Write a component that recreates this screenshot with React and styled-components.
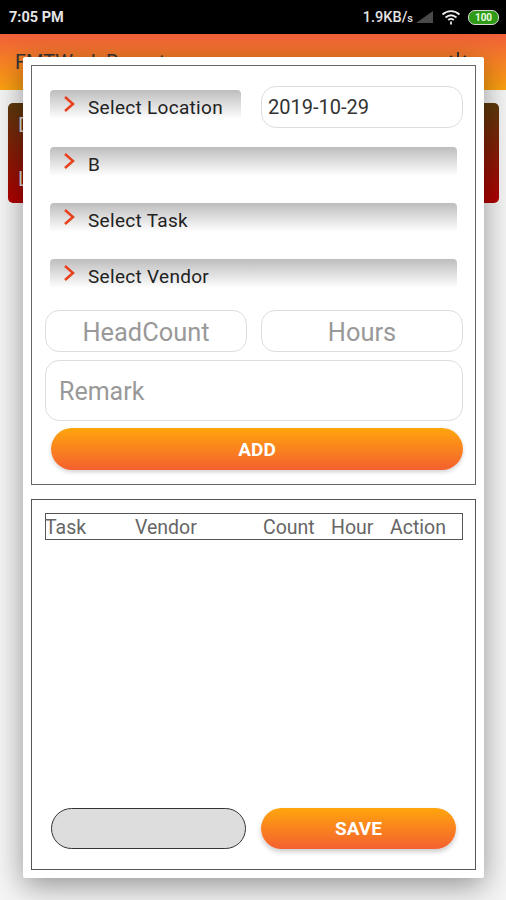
import styled, { createGlobalStyle } from 'styled-components';

const GlobalStyle = createGlobalStyle`
    html, body {
        margin: 0;
        padding: 0;
        background: #f5f5f5;
        font-family: Roboto, "Liberation Sans", sans-serif;
    }
`;

function Chevron() {
    return (
        <ChevronIcon viewBox="0 0 12 16">
            <path d="M2 1 L10 8 L2 15" fill="none" stroke="#e8401c" strokeWidth="2.5" />
        </ChevronIcon>
    );
}

function SelectBox({ label, half }) {
    return (
        <StyledSelect $half={half}>
            <Chevron />
            <span>{label}</span>
        </StyledSelect>
    );
}

function App() {
    return (
        <Screen>
            <GlobalStyle />
            <StatusBar>
                <span>7:05 PM</span>
                <StatusRight>
                    <Speed>1.9KB/<small>s</small></Speed>
                    <svg width="20" height="14" viewBox="0 0 20 14">
                        <path d="M1 13 L18 1 L18 13 Z" fill="#4a4a4a" />
                    </svg>
                    <WifiIcon width="20" height="16" viewBox="0 0 20 16" fill="none" stroke="#eee" strokeWidth="1.8">
                        <path d="M1.5 5.5 C6.5 1 13.5 1 18.5 5.5" />
                        <path d="M4.5 8.5 C8 5.6 12 5.6 15.5 8.5" />
                        <path d="M7.2 11 C9 9.6 11 9.6 12.8 11" />
                        <path d="M10 12.5 L10 15.5" />
                    </WifiIcon>
                    <Battery>100</Battery>
                </StatusRight>
            </StatusBar>
            <AppHeader>
                <HeaderTitle>FMTWork Report</HeaderTitle>
                <svg width="26" height="26" viewBox="0 0 26 26" fill="none" stroke="#333" strokeWidth="2">
                    <path d="M13 2 L13 13" />
                    <path d="M7 6 A10 10 0 1 0 19 6" />
                </svg>
            </AppHeader>
            <BackCard>
                <div>Date</div>
                <div>Location</div>
            </BackCard>

            <Dialog>
                <FormPanel>
                    <FirstRow>
                        <SelectBox label="Select Location" half />
                        <DateField>2019-10-29</DateField>
                    </FirstRow>
                    <SelectBox label="B" />
                    <SelectBox label="Select Task" />
                    <SelectBox label="Select Vendor" />
                    <InputRow>
                        <TextField>HeadCount</TextField>
                        <TextField>Hours</TextField>
                    </InputRow>
                    <RemarkField>Remark</RemarkField>
                    <AddButton>ADD</AddButton>
                </FormPanel>
                <ListPanel>
                    <TableHead>
                        <TaskCol>Task</TaskCol>
                        <VendorCol>Vendor</VendorCol>
                        <CountCol>Count</CountCol>
                        <HourCol>Hour</HourCol>
                        <span>Action</span>
                    </TableHead>
                    <Footer>
                        <GreyPill />
                        <SaveButton>SAVE</SaveButton>
                    </Footer>
                </ListPanel>
            </Dialog>
        </Screen>
    );
}

export default App;

const Screen = styled.div`
    position: relative;
    width: 506px;
    height: 900px;
    overflow: hidden;
    background: #f5f5f5;
`;

const StatusBar = styled.div`
    height: 34px;
    background: #000;
    color: #e4e4e4;
    display: flex;
    align-items: center;
    justify-content: space-between;
    padding: 0 7px 0 9px;
    font-size: 14.5px;
    font-weight: 700;
`;

const StatusRight = styled.div`
    display: flex;
    align-items: center;
    gap: 2px;
`;

const Speed = styled.span`
    font-size: 14.5px;
    font-weight: 500;

    small {
        font-size: 11px;
    }
`;

const WifiIcon = styled.svg`
    margin: 0 5px 0 4px;
`;

const Battery = styled.span`
    width: 31px;
    height: 15px;
    box-sizing: border-box;
    border-radius: 7px;
    border: 1px solid #d8d8d8;
    background: #2f9a16;
    color: #e8ffe0;
    font-size: 10px;
    font-weight: 700;
    text-align: center;
    line-height: 13px;
`;

const AppHeader = styled.header`
    height: 56px;
    background: linear-gradient(#f0603a, #fca20e);
    display: flex;
    align-items: flex-start;
    justify-content: space-between;
    padding: 16px 35px 0 15px;
    box-sizing: border-box;
`;

const HeaderTitle = styled.div`
    font-size: 20px;
    color: #333;
`;

const BackCard = styled.div`
    margin: 13px 7px 0 8px;
    height: 100px;
    padding: 10px;
    box-sizing: border-box;
    border-radius: 5px;
    background: linear-gradient(#5c3a0c, #b30000);
    color: #ddd;
    font-size: 20px;
    display: flex;
    flex-direction: column;
    gap: 30px;
`;

const Dialog = styled.div`
    position: absolute;
    left: 23px;
    top: 57px;
    width: 461px;
    height: 821px;
    padding: 8px;
    box-sizing: border-box;
    background: #fff;
    border-radius: 2px;
    box-shadow: 0 8px 30px rgba(0, 0, 0, 0.4);
    display: flex;
    flex-direction: column;
    gap: 14px;
`;

const FormPanel = styled.section`
    height: 420px;
    box-sizing: border-box;
    border: 1px solid #666;
    padding: 20px 12px 0 13px;
    display: flex;
    flex-direction: column;
`;

const ListPanel = styled.section`
    flex: 1;
    box-sizing: border-box;
    border: 1px solid #555;
    padding: 13px 12px 20px 13px;
    display: flex;
    flex-direction: column;
    justify-content: space-between;
`;

const FirstRow = styled.div`
    display: flex;
    justify-content: space-between;
    align-items: flex-start;
`;

const StyledSelect = styled.div`
    width: ${({ $half }) => ($half ? '191px' : '407px')};
    height: 29px;
    margin: ${({ $half }) => ($half ? '4px 0 0 5px' : '0 0 27px 5px')};
    flex-shrink: 0;
    border-radius: 4px;
    background: linear-gradient(#bdbdbd, #ffffff);
    display: flex;
    align-items: center;
    gap: 13px;
    padding: 5px 0 0 13px;
    box-sizing: border-box;
    font-size: 19px;
    color: #222;
    letter-spacing: 0.3px;
`;

const ChevronIcon = styled.svg`
    width: 12px;
    height: 16px;
    margin-top: -7px;
`;

const DateField = styled.div`
    width: 202px;
    height: 42px;
    margin-bottom: 19px;
    box-sizing: border-box;
    border: 1px solid #ddd;
    border-radius: 15px;
    font-size: 20px;
    line-height: 41px;
    padding-left: 6px;
    color: #333;
`;

const InputRow = styled.div`
    display: flex;
    justify-content: space-between;
    margin-top: -5px;
`;

const TextField = styled.div`
    width: 202px;
    height: 42px;
    box-sizing: border-box;
    border: 1px solid #ddd;
    border-radius: 14px;
    text-align: center;
    line-height: 42px;
    font-size: 25.4px;
    color: #999;
`;

const RemarkField = styled.div`
    height: 61px;
    margin-top: 8px;
    box-sizing: border-box;
    border: 1px solid #ddd;
    border-radius: 14px;
    padding-left: 13px;
    line-height: 62px;
    font-size: 25px;
    color: #999;
`;

const AddButton = styled.div`
    height: 42px;
    margin: 7px 0 0 6px;
    border-radius: 21px;
    background: linear-gradient(#ffa50d, #f4602f);
    box-shadow: 0 2px 4px rgba(0, 0, 0, 0.18);
    color: #fff;
    font-size: 19px;
    font-weight: 700;
    text-align: center;
    line-height: 43px;
`;

const TableHead = styled.div`
    height: 27px;
    box-sizing: border-box;
    border: 1px solid #555;
    padding-top: 2px;
    display: flex;
    align-items: center;
    font-size: 19.5px;
    color: #666;
`;

const TaskCol = styled.span`
    width: 90px;
    margin-left: -1px;
`;

const VendorCol = styled.span`
    width: 128px;
`;

const CountCol = styled.span`
    width: 68px;
`;

const HourCol = styled.span`
    width: 59px;
`;

const Footer = styled.div`
    display: flex;
    justify-content: space-between;
    padding: 0 7px 0 6px;
`;

const GreyPill = styled.div`
    width: 195px;
    height: 41px;
    box-sizing: border-box;
    border: 1px solid #333;
    border-radius: 21px;
    background: #dedddd;
`;

const SaveButton = styled.div`
    width: 195px;
    height: 41px;
    border-radius: 21px;
    background: linear-gradient(#ffa50d, #f4602f);
    box-shadow: 0 3px 5px rgba(0, 0, 0, 0.2);
    color: #fff;
    font-size: 19px;
    font-weight: 700;
    text-align: center;
    line-height: 42px;
`;
